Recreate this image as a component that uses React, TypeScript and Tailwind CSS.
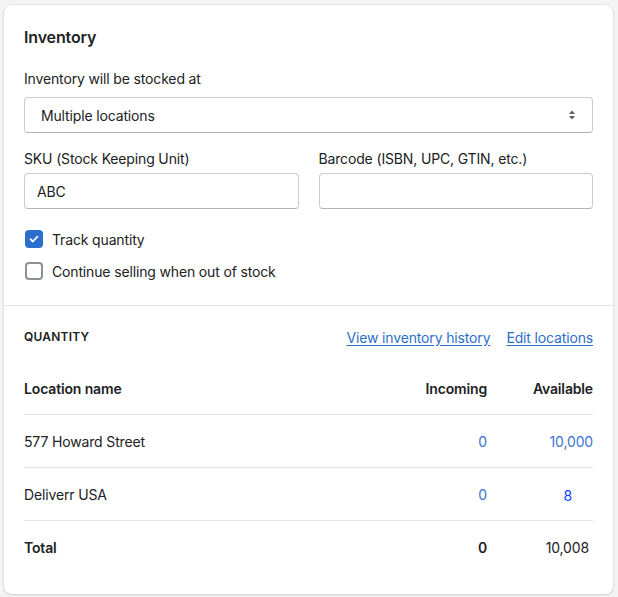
import React from "react";

const font = { fontFamily: "Inter, 'Noto Sans', sans-serif" };

function Checkbox({ checked }: { checked: boolean }) {
  return checked ? (
    <span className="flex h-[18px] w-[18px] items-center justify-center rounded-[4px] bg-[#2c6ecb]">
      <svg width="12" height="12" viewBox="0 0 12 12" fill="none">
        <path d="M2.5 6.2l2.3 2.3 4.7-4.9" stroke="white" strokeWidth="1.8" strokeLinecap="round" strokeLinejoin="round" />
      </svg>
    </span>
  ) : (
    <span className="block h-[18px] w-[18px] rounded-[4px] border-2 border-[#8c9196] bg-white" />
  );
}

export default function App() {
  return (
    <div className="min-h-[597px] bg-[#f4f4f4] pl-[4px] pr-[5px] pt-[5px] tracking-[-0.15px] text-[#202223]" style={font}>
      <div className="rounded-[8px] bg-white shadow-[0_0_0_1px_rgba(63,63,68,0.05),0_1px_3px_0_rgba(63,63,68,0.15)]">
        <div className="border-b border-[#e1e3e5] px-5 pb-[24px] pt-5">
          <h2 className="text-[16px] font-semibold leading-[24px]">Inventory</h2>
          <div className="mt-5 text-[14px] leading-[20px]">Inventory will be stocked at</div>
          <div className="mt-[8px] flex h-[36px] items-center justify-between rounded-[4px] border border-[#c9cccf] border-b-[#aeb4b9] pl-4 pr-[15px] text-[14px]">
            <span>Multiple locations</span>
            <svg width="10" height="12" viewBox="0 0 10 12">
              <path d="M5 1.5L8 5H2z" fill="#5c5f62" />
              <path d="M5 10.5L2 7h6z" fill="#5c5f62" />
            </svg>
          </div>
          <div className="mt-4 grid grid-cols-2 gap-5">
            <div>
              <div className="text-[14px] leading-[20px]">SKU (Stock Keeping Unit)</div>
              <div className="mt-[4px] flex h-[36px] items-center rounded-[4px] border border-[#c9cccf] border-b-[#aeb4b9] px-3 text-[14px]">ABC</div>
            </div>
            <div>
              <div className="text-[14px] leading-[20px]">Barcode (ISBN, UPC, GTIN, etc.)</div>
              <div className="mt-[4px] h-[36px] rounded-[4px] border border-[#c9cccf] border-b-[#aeb4b9]" />
            </div>
          </div>
          <div className="mt-[20px] flex flex-col gap-[12px]">
            <label className="flex h-[20px] items-center gap-[9px] pl-[1px] text-[14px]">
              <Checkbox checked />
              <span>Track quantity</span>
            </label>
            <label className="flex h-[20px] items-center gap-[9px] pl-[1px] text-[14px]">
              <Checkbox checked={false} />
              <span>Continue selling when out of stock</span>
            </label>
          </div>
        </div>
        <div className="px-5 pb-5 pt-[21px]">
          <div className="flex h-[20px] items-center justify-between">
            <span className="text-[12px] font-semibold uppercase tracking-[0.2px]">Quantity</span>
            <div className="flex gap-4 text-[14px] text-[#2c6ecb]">
              <a className="underline underline-offset-2" href="#">View inventory history</a>
              <a className="underline underline-offset-2" href="#">Edit locations</a>
            </div>
          </div>
          <div className="mt-[16px]">
            <div className="flex h-[52px] items-center border-b border-[#e1e3e5] text-[14px] font-semibold">
              <span className="flex-1">Location name</span>
              <span className="w-[100px] text-right">Incoming</span>
              <span className="w-[106px] text-right">Available</span>
            </div>
            <div className="flex h-[53px] items-center border-b border-[#e1e3e5] text-[14px]">
              <span className="flex-1">577 Howard Street</span>
              <span className="w-[100px] text-right text-[#3a74d0]">0</span>
              <span className="w-[106px] text-right text-[#3a74d0]">10,000</span>
            </div>
            <div className="flex h-[53px] items-center border-b border-[#e1e3e5] text-[14px]">
              <span className="flex-1">Deliverr USA</span>
              <span className="w-[100px] text-right text-[#3a74d0]">0</span>
              <span className="w-[106px] pr-[21px] pt-[2px] text-right text-[#0d3fff]">8</span>
            </div>
            <div className="flex h-[53px] items-center text-[14px]">
              <span className="flex-1 font-semibold">Total</span>
              <span className="w-[100px] text-right font-semibold">0</span>
              <span className="w-[106px] pr-[4px] text-right">10,008</span>
            </div>
          </div>
        </div>
      </div>
    </div>
  );
}
